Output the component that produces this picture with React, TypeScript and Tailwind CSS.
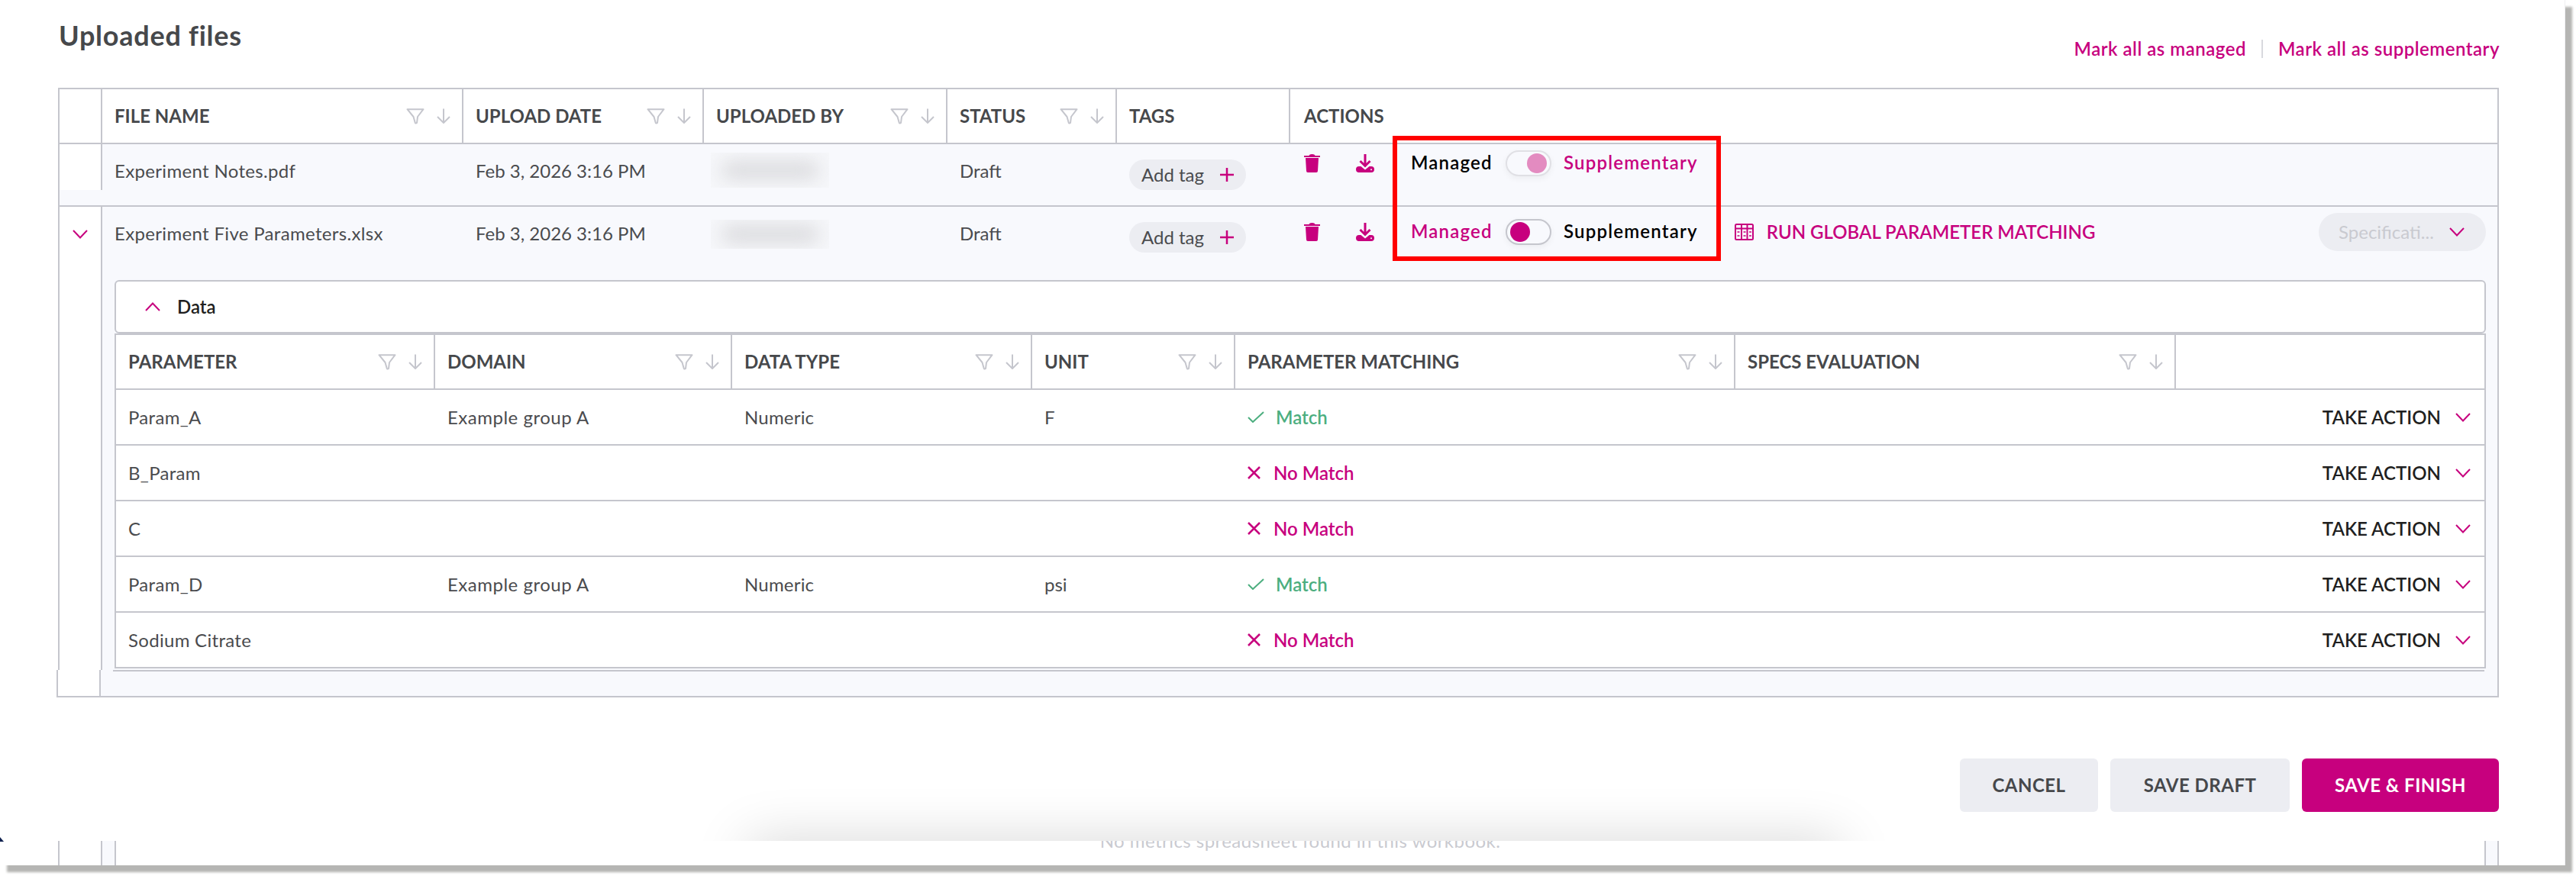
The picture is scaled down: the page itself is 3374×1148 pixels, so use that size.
import React from "react";

const FONT = "font-['Lato','Liberation_Sans',sans-serif]";

function Chevron({ up = false }: { up?: boolean }) {
  return (
    <svg width="20" height="12" viewBox="0 0 20 12" fill="none" className={up ? "rotate-180" : ""}>
      <path d="M1 1 L10 10.5 L19 1" stroke="#c7007e" strokeWidth="2" />
    </svg>
  );
}

function Filter() {
  return (
    <svg width="24" height="21" viewBox="0 0 24 21" fill="none">
      <path d="M1.5 1.2 H22.5 L15 11 L14 19 Q12.8 20 11.8 19 L9.5 11 Z" stroke="#c5c6cd" strokeWidth="2" strokeLinejoin="round" />
    </svg>
  );
}

function ArrowDown() {
  return (
    <svg width="18" height="20" viewBox="0 0 18 20" fill="none">
      <path d="M9 0.5 V18.5 M1 11 L9 19 L17 11" stroke="#c5c6cd" strokeWidth="2" />
    </svg>
  );
}

function Trash() {
  return (
    <svg width="21" height="24" viewBox="0 0 21 24" fill="#c7007e">
      <path d="M0 2 H6.5 Q7 0 10.5 0 T14.5 2 H21 V4 H0 Z" />
      <path d="M2 5 H19 L18 22 Q18 24 16 24 H5 Q3 24 3 22 Z" />
    </svg>
  );
}

function Download() {
  return (
    <svg width="24" height="24" viewBox="0 0 24 24" fill="none">
      <path d="M12 0 V15 M5.5 9 L12 15.5 L18.5 9" stroke="#c7007e" strokeWidth="3" />
      <path d="M0 20 A4 4 0 0 1 4 16 H6.5 L12 20.5 L17.5 16 H20 A4 4 0 0 1 20 24 H4 A4 4 0 0 1 0 20 Z" fill="#c7007e" />
      <circle cx="20" cy="20.3" r="1" fill="#f8f9fd" />
    </svg>
  );
}

function GridIcon() {
  return (
    <svg width="25" height="22" viewBox="0 0 25 22" fill="none" stroke="#c7007e" strokeWidth="2">
      <rect x="1" y="1" width="23" height="20" rx="1.5" />
      <path d="M1 6.5 H24 M9 1 V21 M16.5 1 V21" />
      <path d="M3.5 11 H6.5 M3.5 16 H6.5 M11.5 11 H14.5 M11.5 16 H14.5 M19 11 H22 M19 16 H22" strokeWidth="1.6" />
    </svg>
  );
}

function Plus() {
  return (
    <svg width="18" height="18" viewBox="0 0 18 18" fill="none">
      <path d="M9 0 V18 M0 9 H18" stroke="#c7007e" strokeWidth="2.5" />
    </svg>
  );
}

function HeadCell({ label, sort = true }: { label: string; sort?: boolean }) {
  return (
    <div className="flex h-full items-center justify-between border-r-2 border-[#c5c6cd] pl-4 pr-[15px]">
      <span className="text-[24px] font-bold text-[#46484b]">{label}</span>
      {sort && (
        <span className="flex items-center gap-[16px]">
          <Filter />
          <ArrowDown />
        </span>
      )}
    </div>
  );
}

function Toggle({ on }: { on: boolean }) {
  return (
    <div
      className={`flex h-[34px] w-[60px] items-center rounded-full border-2 px-[4px] bg-[#f8f9fd] shadow-[0_3px_8px_rgba(0,0,0,0.05)] ${
        on ? "justify-end border-[#e0e0e5]" : "justify-start border-[#c5c6cd]"
      }`}
    >
      <div className={`h-[26px] w-[26px] rounded-full ${on ? "bg-[#e38bc0]" : "bg-[#c7007e]"}`} />
    </div>
  );
}

function Switcher({ supplementary }: { supplementary: boolean }) {
  return (
    <div className="flex items-center">
      <span className={`-mt-[2px] w-[124px] text-[24px] font-semibold tracking-[1.2px] ${supplementary ? "text-black" : "text-[#c7007e]"}`}>Managed</span>
      <Toggle on={supplementary} />
      <span className={`-mt-[2px] ml-[16px] text-[24px] font-semibold tracking-[1.2px] ${supplementary ? "text-[#c7007e]" : "text-black"}`}>Supplementary</span>
    </div>
  );
}

function Blurred({ h }: { h: string }) {
  return (
    <div className={`flex w-[155px] items-center justify-center overflow-hidden bg-[#f6f7fa] ${h}`}>
      <div className="h-[20px] w-[128px] rounded-full bg-[#d6d6d9] blur-[12px]" />
    </div>
  );
}

function TagPill() {
  return (
    <div className="flex h-[40px] w-[153px] items-center justify-between rounded-full bg-[#ecedf2] pl-4 pr-[16px]">
      <span className="text-[24px] text-[#4a4b4e]">Add tag</span>
      <Plus />
    </div>
  );
}

const mainCols = "grid grid-cols-[56px_473px_315px_319px_222px_227px_1fr]";
const subCols = "grid grid-cols-[418px_389px_393px_266px_655px_577px_1fr]";

function FileCells({
  name,
  date,
  blurH,
  blurMt,
  supplementary,
  chevron,
  extra,
}: {
  name: string;
  date: string;
  blurH: string;
  blurMt: string;
  supplementary: boolean;
  chevron?: boolean;
  extra?: React.ReactNode;
}) {
  return (
    <div className={mainCols}>
      <div className="flex justify-center border-r-2 border-[#c5c6cd] bg-white pt-[30px]">{chevron && <Chevron />}</div>
      <div className="col-span-6 grid grid-cols-[473px_315px_319px_222px_227px_1fr] bg-[#f8f9fd]">
        <div className="pl-4 pt-[19px] text-[24px] leading-[32px] tracking-[0.33px] text-[#4a4b4e]">{name}</div>
        <div className="pl-4 pt-[19px] text-[24px] leading-[32px] text-[#4a4b4e]">{date}</div>
        <div className={`pl-[9px] ${blurMt}`}>
          <Blurred h={blurH} />
        </div>
        <div className="pl-4 pt-[19px] text-[24px] leading-[32px] text-[#4a4b4e]">Draft</div>
        <div className="pl-4 pt-[20px]">
          <TagPill />
        </div>
        <div className="flex items-center self-start pl-[18px] pr-[15px] pt-2">
          <Trash />
          <span className="ml-[47px]">
            <Download />
          </span>
          <span className="ml-[48px]">
            <Switcher supplementary={supplementary} />
          </span>
          {extra}
        </div>
      </div>
    </div>
  );
}

function SubRow({ cells, match }: { cells: [string, string, string, string]; match: boolean }) {
  return (
    <div className={`${subCols} h-[73px] items-center border-b-2 border-[#c5c6cd] bg-white`}>
      <div className="pl-4 text-[24px] tracking-[0.3px] text-[#4a4b4e]">{cells[0]}</div>
      <div className="pl-4 text-[24px] tracking-[0.5px] text-[#4a4b4e]">{cells[1]}</div>
      <div className="pl-4 text-[24px] tracking-[0.2px] text-[#4a4b4e]">{cells[2]}</div>
      <div className="pl-4 text-[24px] text-[#4a4b4e]">{cells[3]}</div>
      <div className="pl-4">
        {match ? (
          <span className="flex items-center gap-[15px] text-[24px] font-semibold text-[#4cae7f]">
            <svg width="22" height="15" viewBox="0 0 22 15" fill="none">
              <path d="M1 8 L7 14 L21 1" stroke="#4cae7f" strokeWidth="2" />
            </svg>
            Match
          </span>
        ) : (
          <span className="flex items-center gap-[17px] text-[24px] font-semibold text-[#c7007e]">
            <svg width="17" height="17" viewBox="0 0 17 17" fill="none">
              <path d="M1 1 L16 16 M16 1 L1 16" stroke="#c7007e" strokeWidth="2.5" />
            </svg>
            No Match
          </span>
        )}
      </div>
      <div />
      <div className="col-start-7 -ml-[400px] flex items-center justify-end gap-[19px] pr-[18px]">
        <span className="text-[24px] font-semibold text-[#1f1f21]">TAKE ACTION</span>
        <Chevron />
      </div>
    </div>
  );
}

export default function App() {
  return (
    <div className={`relative h-[1148px] w-[3374px] overflow-hidden bg-white ${FONT}`}>
      <div className="absolute left-0 top-0 h-[1134px] w-[3360px] bg-white shadow-[9px_9px_3px_#b5b5b3]" />
      <div className="absolute left-0 top-0 flex h-[1134px] w-[3360px] flex-col overflow-hidden border-r border-[#efeff1]">
        <div className="flex h-[115px] shrink-0 items-start justify-between pl-[77px] pr-[85px]">
          <h1 className="pt-[26px] text-[36px] font-bold leading-[40px] tracking-[0.75px] text-[#46484b]">Uploaded files</h1>
          <div className="flex items-center pt-[46px] text-[24px] font-semibold leading-[36px] tracking-[0.5px] text-[#c7007e]">
            <span>Mark all as managed</span>
            <span className="mx-[20px] h-[24px] w-[2px] bg-[#d8d9de]" />
            <span>Mark all as supplementary</span>
          </div>
        </div>

        <div className="ml-[76px] w-[3197px] shrink-0">
          <div className="border-x-2 border-t-2 border-[#c5c6cd]">
            <div className={`${mainCols} h-[72px] border-b-2 border-[#c5c6cd]`}>
              <div className="border-r-2 border-[#c5c6cd]" />
              <HeadCell label="FILE NAME" />
              <HeadCell label="UPLOAD DATE" />
              <HeadCell label="UPLOADED BY" />
              <HeadCell label="STATUS" />
              <HeadCell label="TAGS" sort={false} />
              <div className="flex items-center pl-[18px] text-[24px] font-bold text-[#46484b]">ACTIONS</div>
            </div>

            <div className="h-[82px] border-b-2 border-[#c5c6cd] bg-[#f8f9fd]">
              <FileCells
                name="Experiment Notes.pdf"
                date="Feb 3, 2026 3:16 PM"
                blurH="h-[46px]"
                blurMt="pt-[11px]"
                supplementary
              />
            </div>

            <div className="relative h-[607px]">
              <div className="absolute inset-y-0 left-0 w-[56px] border-r-2 border-[#c5c6cd] bg-white" />
              <div className="absolute inset-y-0 left-[56px] right-0 bg-[#f8f9fd]" />
              <div className="relative">
                <div className="h-[96px]">
                  <FileCells
                    name="Experiment Five Parameters.xlsx"
                    date="Feb 3, 2026 3:16 PM"
                    blurH="h-[38px]"
                    blurMt="pt-[17px]"
                    supplementary={false}
                    chevron
                    extra={
                      <>
                        <span className="ml-[48px]">
                          <GridIcon />
                        </span>
                        <span className="ml-[17px] text-[24px] font-semibold text-[#c7007e]">RUN GLOBAL PARAMETER MATCHING</span>
                        <div className="ml-auto flex h-[50px] w-[219px] items-center justify-between rounded-full bg-[#ecedf2] pl-[26px] pr-[28px]">
                          <span className="text-[24px] text-[#c9cad0]">Specificati...</span>
                          <Chevron />
                        </div>
                      </>
                    }
                  />
                </div>
                <div className="ml-[72px] w-[3106px]">
                  <div className="flex h-[70px] items-center rounded-[6px] border-2 border-[#c5c6cd] bg-white pl-[38px]">
                    <Chevron up />
                    <span className="ml-[22px] text-[24px] font-semibold text-[#1f1f21]">Data</span>
                  </div>
                  <div className="border-x-2 border-t-2 border-[#c5c6cd]">
                    <div className={`${subCols} h-[72px] items-stretch border-b-2 border-[#c5c6cd] bg-white`}>
                      <HeadCell label="PARAMETER" />
                      <HeadCell label="DOMAIN" />
                      <HeadCell label="DATA TYPE" />
                      <HeadCell label="UNIT" />
                      <HeadCell label="PARAMETER MATCHING" />
                      <HeadCell label="SPECS EVALUATION" />
                      <div />
                    </div>
                    <SubRow cells={["Param_A", "Example group A", "Numeric", "F"]} match />
                    <SubRow cells={["B_Param", "", "", ""]} match={false} />
                    <SubRow cells={["C", "", "", ""]} match={false} />
                    <SubRow cells={["Param_D", "Example group A", "Numeric", "psi"]} match />
                    <SubRow cells={["Sodium Citrate", "", "", ""]} match={false} />
                  </div>
                </div>
              </div>
            </div>
          </div>

          <div className={`-ml-[2px] h-[36px] w-[3199px] ${mainCols} border-x-2 border-b-2 border-[#c5c6cd]`}>
            <div className="border-r-2 border-[#c5c6cd] bg-white" />
            <div className="col-span-6 bg-[#f8f9fd] pl-[16px] pr-[16px]">
              <div className="mr-[1px] h-[2px] bg-[#c5c6cd]" />
            </div>
          </div>
        </div>

        <div className="relative flex h-[188px] shrink-0 items-start justify-end gap-[16px] pr-[86px] pt-[80px]">
          <div className="absolute bottom-0 left-[880px] h-[100px] w-[1640px] overflow-hidden">
            <div className="absolute left-[100px] top-full h-[60px] w-[1430px] shadow-[0_0_70px_rgba(0,0,0,0.17)]" />
          </div>
          <button className="relative h-[70px] w-[181px] rounded-[6px] bg-[#ecedf2] text-[24px] font-bold tracking-[0.5px] text-[#46484b]">CANCEL</button>
          <button className="relative h-[70px] w-[235px] rounded-[6px] bg-[#ecedf2] text-[24px] font-bold tracking-[0.5px] text-[#46484b]">SAVE DRAFT</button>
          <button className="relative h-[70px] w-[258px] rounded-[6px] bg-[#c7007e] text-[24px] font-bold tracking-[0.5px] text-white">SAVE &amp; FINISH</button>
        </div>

        <div className={`ml-[76px] h-[32px] w-[3197px] shrink-0 ${mainCols} border-x-2 border-[#c5c6cd]`}>
          <div className="border-r-2 border-[#c5c6cd]" />
          <div className="col-span-6 bg-[#f8f9fd] pl-[16px] pr-[15px]">
            <div className="flex h-full justify-center overflow-hidden border-x-2 border-[#c5c6cd] bg-white">
              <span className="-mt-[15px] text-[24px] leading-[30px] tracking-[0.45px] text-[#c9cad0]">No metrics spreadsheet found in this workbook.</span>
            </div>
          </div>
        </div>
      </div>

      <div className="absolute left-[1824px] top-[178px] h-[164px] w-[430px] border-[6px] border-[#ff0000]" />
      <svg className="absolute left-0 top-[1097px]" width="5" height="6" viewBox="0 0 5 6">
        <path d="M0 0 L5 6 H0 Z" fill="#10214f" />
      </svg>
    </div>
  );
}
